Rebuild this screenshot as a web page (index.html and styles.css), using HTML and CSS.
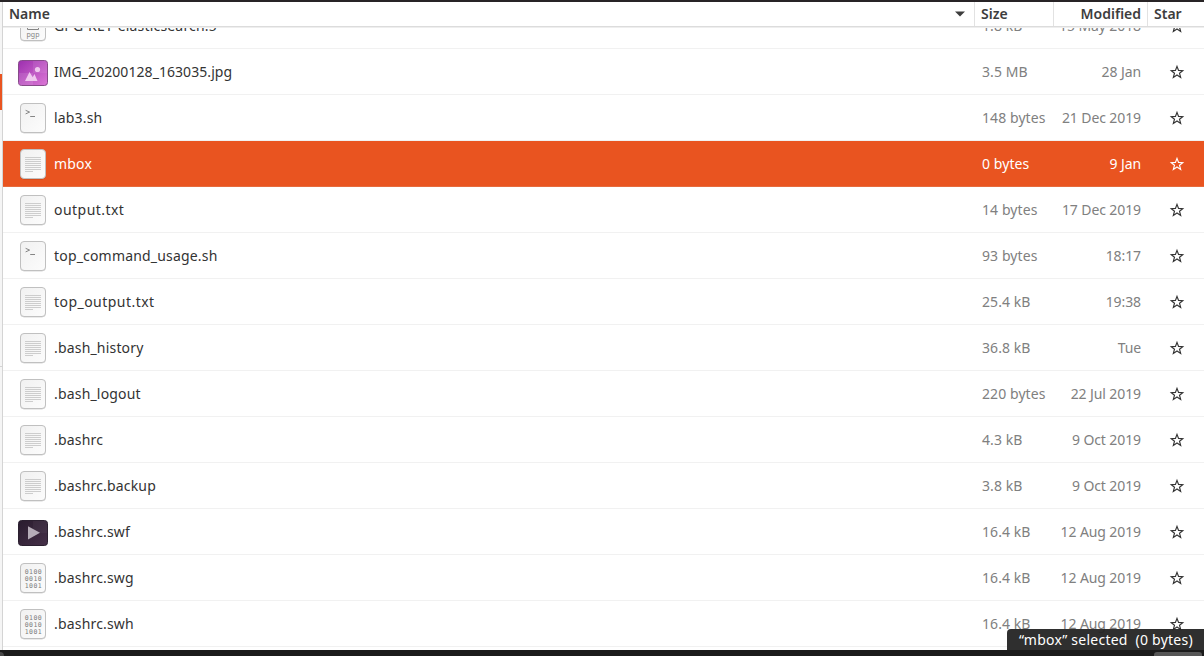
FILE: index.html
```
<!DOCTYPE html>
<html lang="en">
<head>
<meta charset="utf-8">
<title>Files</title>
<link rel="stylesheet" href="styles.css">
</head>
<body>
<svg class="defs" aria-hidden="true">
  <defs>
    <linearGradient id="paper" x1="0" y1="0" x2="1" y2="1"><stop offset="0" stop-color="#f1f1f1"/><stop offset="1" stop-color="#fcfcfc"/></linearGradient>
    <linearGradient id="pink" x1="0" y1="0" x2="1" y2="1"><stop offset="0" stop-color="#9c2fae"/><stop offset="1" stop-color="#dc78d6"/></linearGradient>
    <linearGradient id="night" x1="0" y1="0" x2="1" y2="1"><stop offset="0" stop-color="#291c2e"/><stop offset="1" stop-color="#463048"/></linearGradient>
  </defs>
  <symbol id="sheet" viewBox="0 0 30 32">
    <rect x="2.5" y="2" width="25" height="29" rx="3.5" fill="none" stroke="#000" stroke-opacity=".16"/>
    <rect x="2.5" y="1.5" width="25" height="29" rx="3.5" fill="url(#paper)" stroke="#c0c0c0"/>
  </symbol>
  <symbol id="text" viewBox="0 0 30 32">
    <use href="#sheet"/>
    <path d="M7 9.5h16M7 11.5h16M7 13.5h16M7 15.5h16M7 17.5h16M7 19.5h16M7 21.5h16M7 23.5h8" stroke="#cdcdcd" fill="none"/>
  </symbol>
  <symbol id="shell" viewBox="0 0 30 32">
    <use href="#sheet"/>
    <path d="M7.6 8.3l4 1.8-4 1.8M12.2 14.5h4.8" stroke="#858585" fill="none"/>
  </symbol>
  <symbol id="binary" viewBox="0 0 30 32">
    <use href="#sheet"/>
    <g class="digits"><text x="6.7" y="12.3" textLength="17">0100</text><text x="6.7" y="19.3" textLength="17">0010</text><text x="6.7" y="26.3" textLength="17">1001</text></g>
  </symbol>
  <symbol id="key" viewBox="0 0 30 32">
    <use href="#sheet"/>
    <path d="M9.5 10.5h11v9h-11z" stroke="#858585" fill="none"/>
    <text class="pgp" x="8.5" y="26.6" textLength="13" lengthAdjust="spacingAndGlyphs">pgp</text>
  </symbol>
  <symbol id="image" viewBox="0 0 30 32">
    <rect x=".5" y="4.5" width="29" height="25" rx="3" fill="url(#pink)" stroke="#864b89"/>
    <path d="M15 5h14v12H15z" fill="#fff" opacity=".08"/><path d="M1 17h14v12H1z" fill="#fff" opacity=".1"/>
    <path d="M7 25l4.5-9 3.2 5.2L16.5 18l3 7z" fill="#efc8ee"/><circle cx="19.5" cy="13.5" r="2.6" fill="#efc8ee"/>
  </symbol>
  <symbol id="video" viewBox="0 0 30 32">
    <rect x=".5" y="4.5" width="29" height="25" rx="3" fill="url(#night)" stroke="#2b2030"/>
    <path d="M15 5h14v12H15z" fill="#fff" opacity=".04"/>
    <path d="M10 10.2v13.2l12-6.6z" fill="#b6adb8"/>
  </symbol>
  <symbol id="star" viewBox="0 0 16 16">
    <path d="M8 2.4l1.55 4 4.2.25-3.25 2.6 1.15 4.2L8 11l-3.65 2.45 1.15-4.2-3.25-2.6 4.2-.25z" fill="none" stroke="currentColor" stroke-width="1.15"/>
  </symbol>
</svg>
<div class="window">
  <div class="topbar"></div>
  <div class="content">
    <aside class="sidebar"><div class="place active"></div><div class="divider"></div></aside>
    <main class="files">
      <header class="head">
        <div class="h-name"><span>Name</span><svg width="10" height="6" viewBox="0 0 10 6"><path d="M0 .5h10L5 5.5z" fill="#3d3d3d"/></svg></div>
        <div class="h-size">Size</div><div class="h-mod">Modified</div><div class="h-star">Star</div>
      </header>
      <div class="list">
        <div class="row"><svg class="icon"><use href="#key"/></svg><span class="name">GPG-KEY-elasticsearch.5</span><span class="size">1.8 kB</span><span class="date">15 May 2018</span><svg class="star"><use href="#star"/></svg></div>
        <div class="row"><svg class="icon"><use href="#image"/></svg><span class="name snug">IMG_20200128_163035.jpg</span><span class="size">3.5 MB</span><span class="date">28 Jan</span><svg class="star"><use href="#star"/></svg></div>
        <div class="row"><svg class="icon"><use href="#shell"/></svg><span class="name">lab3.sh</span><span class="size">148 bytes</span><span class="date">21 Dec 2019</span><svg class="star"><use href="#star"/></svg></div>
        <div class="row selected"><svg class="icon"><use href="#text"/></svg><span class="name">mbox</span><span class="size">0 bytes</span><span class="date">9 Jan</span><svg class="star"><use href="#star"/></svg></div>
        <div class="row"><svg class="icon"><use href="#text"/></svg><span class="name wide">output.txt</span><span class="size">14 bytes</span><span class="date">17 Dec 2019</span><svg class="star"><use href="#star"/></svg></div>
        <div class="row"><svg class="icon"><use href="#shell"/></svg><span class="name">top_command_usage.sh</span><span class="size">93 bytes</span><span class="date">18:17</span><svg class="star"><use href="#star"/></svg></div>
        <div class="row"><svg class="icon"><use href="#text"/></svg><span class="name wide">top_output.txt</span><span class="size">25.4 kB</span><span class="date">19:38</span><svg class="star"><use href="#star"/></svg></div>
        <div class="row"><svg class="icon"><use href="#text"/></svg><span class="name">.bash_history</span><span class="size">36.8 kB</span><span class="date">Tue</span><svg class="star"><use href="#star"/></svg></div>
        <div class="row"><svg class="icon"><use href="#text"/></svg><span class="name">.bash_logout</span><span class="size">220 bytes</span><span class="date">22 Jul 2019</span><svg class="star"><use href="#star"/></svg></div>
        <div class="row"><svg class="icon"><use href="#text"/></svg><span class="name">.bashrc</span><span class="size">4.3 kB</span><span class="date">9 Oct 2019</span><svg class="star"><use href="#star"/></svg></div>
        <div class="row"><svg class="icon"><use href="#text"/></svg><span class="name">.bashrc.backup</span><span class="size">3.8 kB</span><span class="date">9 Oct 2019</span><svg class="star"><use href="#star"/></svg></div>
        <div class="row"><svg class="icon"><use href="#video"/></svg><span class="name">.bashrc.swf</span><span class="size">16.4 kB</span><span class="date">12 Aug 2019</span><svg class="star"><use href="#star"/></svg></div>
        <div class="row"><svg class="icon"><use href="#binary"/></svg><span class="name">.bashrc.swg</span><span class="size">16.4 kB</span><span class="date">12 Aug 2019</span><svg class="star"><use href="#star"/></svg></div>
        <div class="row"><svg class="icon"><use href="#binary"/></svg><span class="name">.bashrc.swh</span><span class="size">16.4 kB</span><span class="date">12 Aug 2019</span><svg class="star"><use href="#star"/></svg></div>
      </div>
      <div class="status">“mbox” selected&nbsp; (0 bytes)</div>
    </main>
  </div>
  <footer class="bottombar"><div class="knob"></div><div class="tab"></div></footer>
</div>
</body>
</html>
```
FILE: styles.css
```
* { box-sizing: border-box; }
body { margin: 0; overflow: hidden; background: #fff; font-family: "Noto Sans", "Open Sans", sans-serif; font-size: 14px; color: #333; }
.defs { position: absolute; width: 0; height: 0; }
.window { width: 1204px; height: 656px; display: flex; flex-direction: column; }
.topbar { height: 2px; background: #282426; }
.content { height: 648px; display: flex; }
.sidebar { width: 3px; background: #f5f5f5; border-right: 1px solid #d4d4d4; padding-top: 72px; }
.place.active { height: 36px; background: #e95420; }
.divider { height: 1px; margin-top: 256px; background: #d4d4d4; }
.files { position: relative; flex: 1; display: flex; flex-direction: column; overflow: hidden; }
.head { height: 25px; flex: none; display: grid; grid-template-columns: 971px 79px 94px 57px; line-height: 24px; font-weight: 600; color: #3d3d3d; border-bottom: 1px solid #dcdcdc; box-shadow: 0 1px 0 #eeeeee; background: #fff; z-index: 1; }
.head > div { padding-left: 6px; }
.head > div + div { border-left: 1px solid #e2e2e2; }
.h-name { display: flex; justify-content: space-between; align-items: center; padding-right: 9px; }
.h-mod { text-align: right; padding-right: 6px; }
.list { flex: 1; min-height: 0; overflow: hidden; display: flex; flex-direction: column; margin-top: -24px; }
.row { flex: none; height: 46px; display: grid; grid-template-columns: 30px 922px 75px 96px 44px; padding-left: 15px; align-items: center; border-bottom: 1px solid #f1f1f1; line-height: 20px; white-space: nowrap; }
.icon { width: 30px; height: 32px; margin-top: 1px; }
.name { padding-left: 6px; letter-spacing: .18px; }
.name.snug { letter-spacing: .06px; }
.name.wide { letter-spacing: .46px; }
.size { padding-left: 12px; color: #808080; letter-spacing: .08px; }
.date { text-align: right; color: #808080; letter-spacing: -.1px; }
.star { width: 16px; height: 16px; margin-left: 28px; color: #333; }
.selected { background: #e95420; border-bottom-color: #e66b3d; }
.selected .name, .selected .size, .selected .date, .selected .star { color: #fff; }
.digits { font: 6.5px "DejaVu Sans Mono", monospace; fill: #7c7c7c; }
.pgp { font: 7px "Noto Sans", sans-serif; fill: #858585; }
.status { position: absolute; right: 0; bottom: 0; width: 197px; height: 21px; padding-left: 12px; border-radius: 4px 0 0 0; background: rgba(36,36,36,.95); color: #fff; line-height: 21px; letter-spacing: .25px; white-space: nowrap; z-index: 2; }
.bottombar { height: 6px; background: #1b1b1b; display: flex; justify-content: space-between; align-items: flex-end; overflow: hidden; }
.knob { width: 4px; height: 4px; border-radius: 0 4px 0 0; background: #484848; }
.tab { width: 48px; height: 4px; border-radius: 3px 3px 0 0; background: #565656; margin-right: 2px; }
```
